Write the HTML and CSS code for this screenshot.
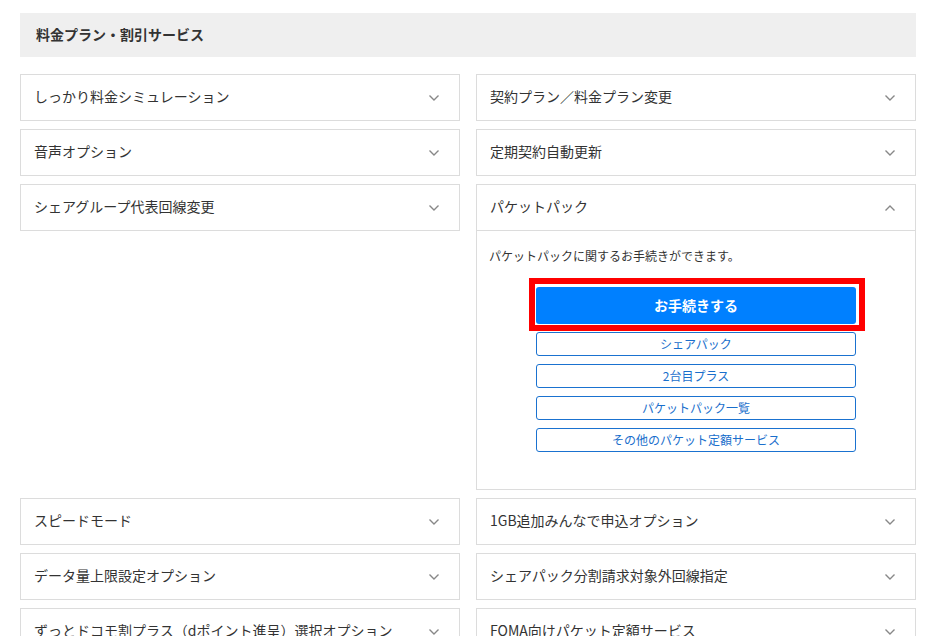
FILE: index.html
```html
<!DOCTYPE html>
<html lang="ja">
<head>
<meta charset="utf-8">
<title>料金プラン・割引サービス</title>
<link rel="stylesheet" href="styles.css">
</head>
<body>
<div class="page">
  <h2 class="section-title"><span>料金プラン・割引サービス</span></h2>
  <div class="grid">
    <div class="item"><div class="item-head"><span class="label">しっかり料金シミュレーション</span><svg class="chev" viewBox="0 0 10 6"><polyline points="0.5,0.5 5,5 9.5,0.5"/></svg></div></div>
    <div class="item"><div class="item-head"><span class="label">契約プラン／料金プラン変更</span><svg class="chev" viewBox="0 0 10 6"><polyline points="0.5,0.5 5,5 9.5,0.5"/></svg></div></div>
    <div class="item"><div class="item-head"><span class="label">音声オプション</span><svg class="chev" viewBox="0 0 10 6"><polyline points="0.5,0.5 5,5 9.5,0.5"/></svg></div></div>
    <div class="item"><div class="item-head"><span class="label">定期契約自動更新</span><svg class="chev" viewBox="0 0 10 6"><polyline points="0.5,0.5 5,5 9.5,0.5"/></svg></div></div>
    <div class="item"><div class="item-head"><span class="label">シェアグループ代表回線変更</span><svg class="chev" viewBox="0 0 10 6"><polyline points="0.5,0.5 5,5 9.5,0.5"/></svg></div></div>
    <div class="item open">
      <div class="item-head"><span class="label">パケットパック</span><svg class="chev" viewBox="0 0 10 6"><polyline points="0.5,5.5 5,1 9.5,5.5"/></svg></div>
      <div class="item-body">
        <p class="desc">パケットパックに関するお手続きができます。</p>
        <div class="actions">
          <div class="primary-wrap"><a class="btn-primary" href="#">お手続きする</a></div>
          <a class="btn-outline" href="#">シェアパック</a>
          <a class="btn-outline" href="#">2台目プラス</a>
          <a class="btn-outline" href="#">パケットパック一覧</a>
          <a class="btn-outline" href="#">その他のパケット定額サービス</a>
        </div>
      </div>
    </div>
    <div class="item"><div class="item-head"><span class="label">スピードモード</span><svg class="chev" viewBox="0 0 10 6"><polyline points="0.5,0.5 5,5 9.5,0.5"/></svg></div></div>
    <div class="item"><div class="item-head"><span class="label">1GB追加みんなで申込オプション</span><svg class="chev" viewBox="0 0 10 6"><polyline points="0.5,0.5 5,5 9.5,0.5"/></svg></div></div>
    <div class="item"><div class="item-head"><span class="label">データ量上限設定オプション</span><svg class="chev" viewBox="0 0 10 6"><polyline points="0.5,0.5 5,5 9.5,0.5"/></svg></div></div>
    <div class="item"><div class="item-head"><span class="label">シェアパック分割請求対象外回線指定</span><svg class="chev" viewBox="0 0 10 6"><polyline points="0.5,0.5 5,5 9.5,0.5"/></svg></div></div>
    <div class="item"><div class="item-head"><span class="label">ずっとドコモ割プラス（dポイント進呈）選択オプション</span><svg class="chev" viewBox="0 0 10 6"><polyline points="0.5,0.5 5,5 9.5,0.5"/></svg></div></div>
    <div class="item"><div class="item-head"><span class="label">FOMA向けパケット定額サービス</span><svg class="chev" viewBox="0 0 10 6"><polyline points="0.5,0.5 5,5 9.5,0.5"/></svg></div></div>
  </div>
</div>
</body>
</html>
```
FILE: styles.css
```css
html, body {
  margin: 0;
  padding: 0;
  background: #fff;
}
body {
  font-family: "Noto Sans CJK JP", "Noto Sans", sans-serif;
  color: #333;
  overflow: hidden;
}
.page {
  width: 896px;
  padding: 13px 0 0 20px;
}
.section-title {
  margin: 0;
  height: 44px;
  box-sizing: border-box;
  display: flex;
  align-items: center;
  padding: 0 0 2px 16px;
  background: #efefef;
  font-size: 14px;
  font-weight: bold;
  color: #333;
}
.grid {
  margin-top: 17px;
  display: grid;
  grid-template-columns: 440px 440px;
  column-gap: 16px;
  row-gap: 8px;
  align-items: start;
}
.item {
  border: 1px solid #dcdcdc;
  background: #fff;
}
.item-head {
  height: 45px;
  display: flex;
  align-items: center;
  justify-content: space-between;
  padding: 0 20px 0 13px;
  font-size: 14px;
  color: #333;
  white-space: nowrap;
  overflow: hidden;
}
.label {
  margin-bottom: 4px;
}
.chev {
  width: 10px;
  height: 6px;
  flex: none;
  fill: none;
  stroke: #888;
  stroke-width: 1.4;
}
.item-body {
  border-top: 1px solid #dcdcdc;
  padding: 15px 12px 37px;
}
.desc {
  margin: 0;
  font-size: 12px;
  line-height: 20px;
  color: #333;
}
.actions {
  width: 320px;
  margin: 21px auto 0;
  display: flex;
  flex-direction: column;
  gap: 8px;
}
.primary-wrap {
  position: relative;
}
.primary-wrap::after {
  content: "";
  position: absolute;
  left: -7px;
  right: -9px;
  top: -9px;
  bottom: -7px;
  border: 6px solid #ff0000;
  pointer-events: none;
}
.btn-primary {
  display: flex;
  align-items: center;
  justify-content: center;
  height: 37px;
  padding-bottom: 2px;
  box-sizing: border-box;
  background: #0080ff;
  border-radius: 3px;
  color: #fff;
  font-size: 14px;
  font-weight: bold;
  text-decoration: none;
}
.btn-outline {
  display: flex;
  align-items: center;
  justify-content: center;
  height: 24px;
  padding-bottom: 1px;
  box-sizing: border-box;
  border: 1px solid #1a72d0;
  border-radius: 3px;
  color: #1a6fcc;
  font-size: 12px;
  text-decoration: none;
}
```
